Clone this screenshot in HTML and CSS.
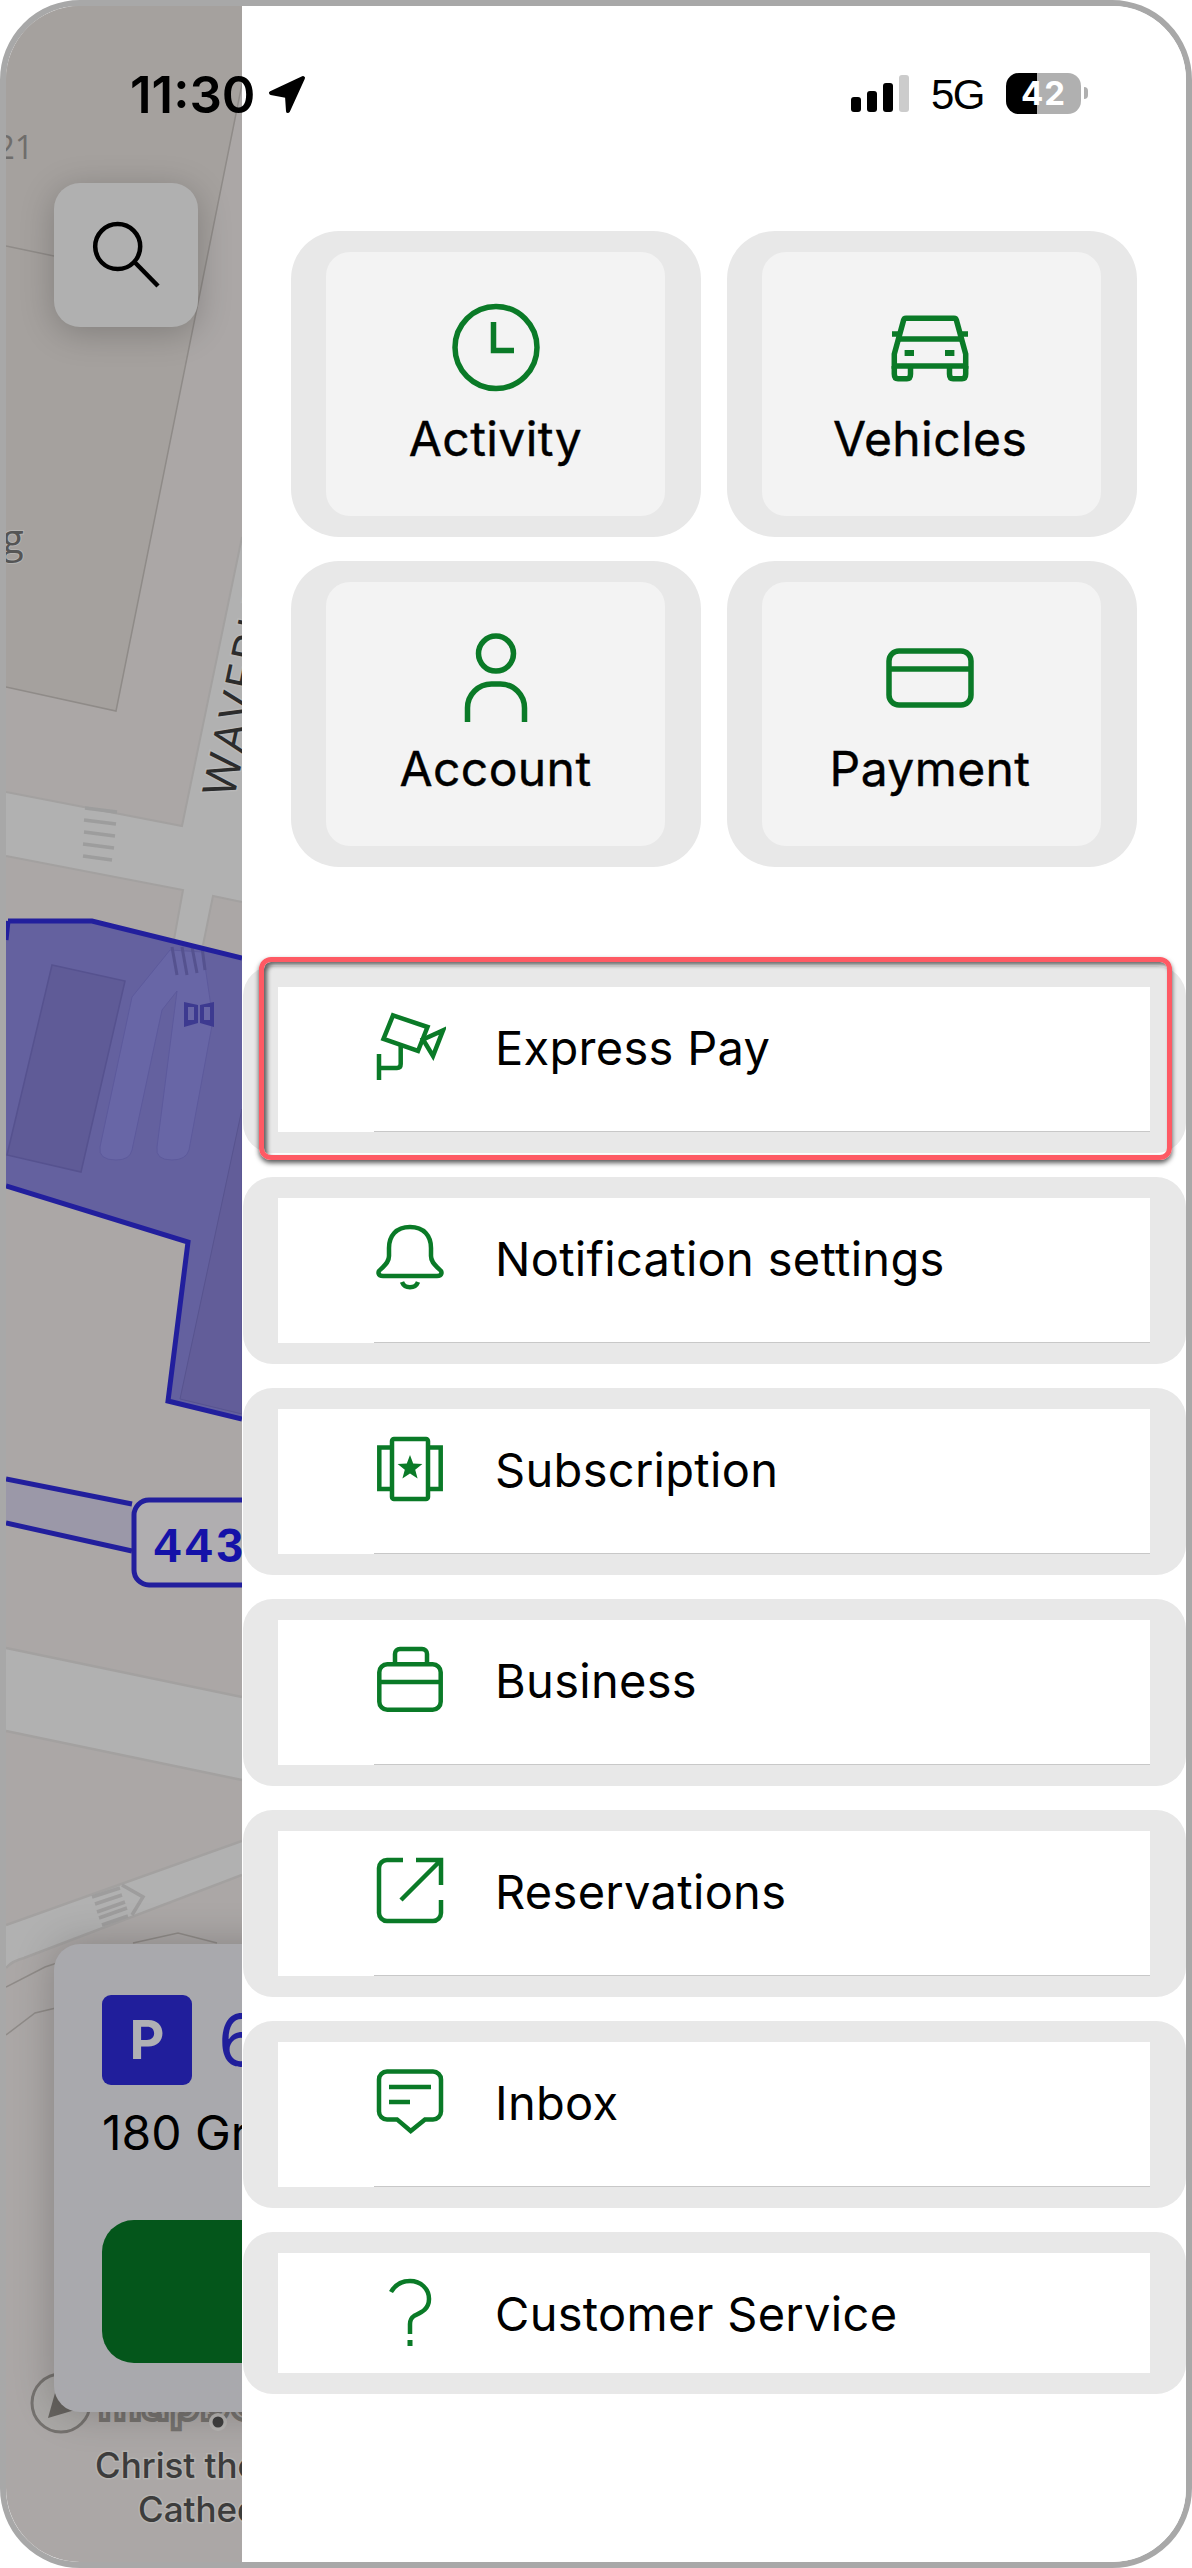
FILE: index.html
```html
<!DOCTYPE html>
<html lang="en">

<head>
    <meta charset="UTF-8">
    <meta name="viewport" content="width=device-width, initial-scale=1.0">
    <link rel="stylesheet" href="styles.css">
    <title>Menu</title>
</head>

<body>
    <div class="phone">
        <div class="status-bar">
            <div class="status-left">
                <span class="time">11:30</span>
                <svg class="loc-arrow" viewBox="0 0 38 39"><polygon points="35,3 3,18 19,21 20,36" /></svg>
            </div>
            <div class="status-right">
                <div class="signal">
                    <span class="bar bar-1"></span>
                    <span class="bar bar-2"></span>
                    <span class="bar bar-3"></span>
                    <span class="bar bar-4"></span>
                </div>
                <span class="network">5G</span>
                <div class="battery"><span class="battery-text">42</span></div>
                <span class="battery-nub"></span>
            </div>
        </div>

        <div class="map">
            <svg class="map-art" viewBox="6 6 236 2556">
                <rect x="6" y="6" width="236" height="2556" fill="#aba7a6" />
                <polygon points="6,6 242,6 242,84 116,711 6,687" fill="#a5a19e" />
                <path d="M6 246 L198 286 M242 84 L116 711 L6 687" fill="none" stroke="#8f8b88" stroke-width="1.5" />
                <polygon points="242,539 240,560 242,560" fill="#a4a09d" />

                <polygon points="6,792 182,826 242,537 242,902 213,896 203,945 173,945 183,890 6,856" fill="#b1b1b1" />
                <path d="M6 792 L182 826 L242 537 M6 856 L183 890 L173 945 M242 902 L213 896 L203 945" fill="none" stroke="#a3a1a0" stroke-width="2" />
                <path d="M85 808 L117 812 M84 820 L116 824 M84 832 L115 836 M83 844 L114 848 M83 856 L112 860" fill="none" stroke="#9d9d9d" stroke-width="3.5" />
                <text class="map-road-name" transform="translate(234 799) rotate(-78)">WAVERLY</text>

                <polygon points="8,921 92,921 242,958 242,1419 168,1401 188,1242 6,1186 6,940" fill="#64619f" />
                <polygon points="242,1109 180,1399 242,1414" fill="#625d99" stroke="#58548f" stroke-width="1" />
                <polygon points="52,965 125,981 81,1172 7,1155" fill="#5f5b97" stroke="#56528f" stroke-width="1.5" />
                <path d="M170 950 L132 997 L100 1147 Q98 1160 116 1160 Q130 1160 132 1150 L162 1010 L177 991 L157 1147 Q155 1160 172 1160 Q186 1160 189 1150 L213 1020 L203 952 Z" fill="#6866a6" stroke="#5d5a9c" stroke-width="1" />
                <path d="M172 947 L177 975 M182 947 L187 975 M192 947 L197 973 M202 947 L205 970" fill="none" stroke="#55528f" stroke-width="3" />
                <path d="M184 1002 L198 1005 V1023 L184 1027Z M214 1002 L200 1005 V1023 L214 1027Z" fill="#3d3a90" />
                <path d="M188 1007 H194 V1020 H188Z M204 1007 H210 V1020 H204Z" fill="#6866a6" />
                <path d="M8 921 H92 L242 958 M6 1186 L188 1242 L168 1401 L242 1419 M8 921 L6 940" fill="none" stroke="#221f9d" stroke-width="5" />

                <polygon points="6,1479 132,1504 132,1551 6,1523" fill="#9b98a8" />
                <path d="M6 1479 L132 1504 M6 1523 L132 1551" fill="none" stroke="#221f9d" stroke-width="5" />
                <rect x="134" y="1500" width="130" height="85" rx="15" fill="#b0aeb0" stroke="#221f9d" stroke-width="5" />
                <text class="map-label-blue" x="154" y="1562">443</text>

                <polygon points="6,1648 242,1697 242,1780 6,1731" fill="#b1b1b1" />
                <path d="M6 1648 L242 1697 M6 1731 L242 1780" fill="none" stroke="#a3a1a0" stroke-width="2.5" />
                <path d="M6 1925 L242 1841 V1875 L24 1958 Q12 1961 6 1968Z" fill="#b1b1b1" />
                <path d="M6 1925 L242 1841 M242 1875 L24 1958 Q12 1961 6 1968" fill="none" stroke="#a3a1a0" stroke-width="2.5" />
                <path d="M92 1897 L120 1888 M95 1904 L122 1895 M97 1912 L125 1902 M99 1918 L127 1908 M102 1925 L128 1916 M122 1885 L143 1897 L132 1915" fill="none" stroke="#9e9d9d" stroke-width="3.5" />
                <path d="M6 1987 L45 1967 L60 1962 M133 1943 L178 1933 L217 1943 M6 2035 L35 2013 L60 2007" fill="none" stroke="#8f8b88" stroke-width="1.5" />

                <circle cx="61" cy="2403" r="29" fill="#aaa8a6" stroke="#75726f" stroke-width="3" />
                <polygon points="55,2393 75,2410 48,2418" fill="#66635f" />
                <text class="map-logo" x="98" y="2420">mapbox</text>
                <circle cx="218" cy="2422" r="9" fill="#b5b3b1" />
                <circle cx="218" cy="2422" r="5.5" fill="#3f3f3f" />
                <text class="map-place" x="95" y="2478">Christ the King</text>
                <text class="map-place" x="138" y="2522">Cathedral</text>
                <text class="map-faded" x="-4" y="159">21</text>
                <text class="map-letter" x="2" y="553">g</text>
            </svg>

            <button class="search-btn">
                <svg viewBox="0 0 72 72"><circle cx="27.7" cy="27.6" r="22.5" /><path d="M45 43.5 L68 67" /></svg>
            </button>

            <div class="lot-card">
                <div class="lot-title">
                    <span class="lot-badge">P</span>
                    <span class="lot-price">6</span>
                </div>
                <div class="lot-address">180 Grand Ave</div>
                <div class="lot-action"></div>
            </div>
        </div>

        <div class="panel">
            <div class="tiles">
                <div class="tile">
                    <div class="tile-inner">
                        <svg class="tile-icon" viewBox="0 0 96 96">
                            <circle cx="48" cy="48.5" r="41" />
                            <path d="M45.5 23 V51.5 H66" />
                        </svg>
                        <span class="tile-label">Activity</span>
                    </div>
                </div>
                <div class="tile">
                    <div class="tile-inner">
                        <svg class="tile-icon" viewBox="-10 -17 96 96">
                            <path d="M2.3 50 V38 L11.5 4.5 Q12 2.3 14 2.3 H62 Q64 2.3 64.5 4.5 L73.7 38 V50 Z" />
                            <path d="M6 23 H70 M0 18 H9 M67 18 H76" />
                            <path d="M2.3 50 V58 Q2.3 62.7 6 62.7 H15 Q18.5 62.7 18.5 58 V50 M57.5 50 V58 Q57.5 62.7 61 62.7 H70 Q73.7 62.7 73.7 58 V50" />
                            <rect class="solid" x="12.6" y="34" width="9.4" height="6" />
                            <rect class="solid" x="53" y="34" width="9.4" height="6" />
                        </svg>
                        <span class="tile-label">Vehicles</span>
                    </div>
                </div>
                <div class="tile">
                    <div class="tile-inner">
                        <svg class="tile-icon" viewBox="0 0 96 96">
                            <circle cx="48" cy="24.6" r="17.5" />
                            <path d="M19.5 93 V79 A24 24 0 0 1 43.5 55 H52.5 A24 24 0 0 1 76.5 79 V93" />
                        </svg>
                        <span class="tile-label">Account</span>
                    </div>
                </div>
                <div class="tile">
                    <div class="tile-inner">
                        <svg class="tile-icon" viewBox="0 0 96 96">
                            <rect x="7" y="22" width="82" height="54" rx="10" />
                            <path d="M7 40 H89" />
                        </svg>
                        <span class="tile-label">Payment</span>
                    </div>
                </div>
            </div>

            <div class="menu">
                <div class="menu-row">
                    <div class="menu-item">
                        <svg class="menu-icon" viewBox="0 0 72 72">
                            <path d="M19 4.4 L53.5 16 L44 40 L9.5 28Z" />
                            <path d="M69 19.4 L59 45 L49 28.5Z" />
                            <path d="M26.7 35 V53 Q26.7 57 23 57 H4.5 M5 43 V69" />
                        </svg>
                        <span class="menu-label">Express Pay</span>
                    </div>
                    <div class="highlight"></div>
                </div>
                <div class="menu-row">
                    <div class="menu-item">
                        <svg class="menu-icon" viewBox="0 0 72 72">
                            <path d="M36 5 C22 5 15 14 15 26 V34 C15 40 11 43 7 47 C3 50 4 54 9 54 H63 C68 54 69 50 65 47 C61 43 57 40 57 34 V26 C57 14 50 5 36 5Z" />
                            <path d="M28 60 A8.5 8 0 0 0 44 60" />
                        </svg>
                        <span class="menu-label">Notification settings</span>
                    </div>
                </div>
                <div class="menu-row">
                    <div class="menu-item">
                        <svg class="menu-icon" viewBox="0 0 72 72">
                            <rect x="18" y="6" width="36" height="60" rx="2" />
                            <path d="M18 14.5 H5.3 V56 H18 M54 14.5 H66.7 V56 H54" />
                            <polygon class="solid" points="36,22 39.2,30.5 48.4,31 41.2,36.7 43.6,45.5 36,40.5 28.4,45.5 30.8,36.7 23.6,31 32.8,30.5" />
                        </svg>
                        <span class="menu-label">Subscription</span>
                    </div>
                </div>
                <div class="menu-row">
                    <div class="menu-item">
                        <svg class="menu-icon" viewBox="0 0 72 72">
                            <rect x="5.3" y="20.3" width="61.4" height="45.4" rx="8" />
                            <path d="M5.3 38 H66.7 M21 20 V10 A5 5 0 0 1 26 5 H48 A5 5 0 0 1 53 10 V20" />
                        </svg>
                        <span class="menu-label">Business</span>
                    </div>
                </div>
                <div class="menu-row">
                    <div class="menu-item">
                        <svg class="menu-icon" viewBox="0 0 72 72">
                            <path d="M29 5 H13 A8 8 0 0 0 5 13 V58 A8 8 0 0 0 13 66 H59 A8 8 0 0 0 67 58 V45" />
                            <path d="M42 5 H67 V30 M27 45 L67 5" />
                        </svg>
                        <span class="menu-label">Reservations</span>
                    </div>
                </div>
                <div class="menu-row">
                    <div class="menu-item">
                        <svg class="menu-icon" viewBox="0 0 72 72">
                            <path d="M13 5.6 H59 A8 8 0 0 1 67 13.6 V45.4 A8 8 0 0 1 59 53.4 H51 L36.7 65 L23 53.4 H13 A8 8 0 0 1 5 45.4 V13.6 A8 8 0 0 1 13 5.6Z" />
                            <path d="M15 21 H57 M15 36 H36" />
                        </svg>
                        <span class="menu-label">Inbox</span>
                    </div>
                </div>
                <div class="menu-row">
                    <div class="menu-item last">
                        <svg class="menu-icon" viewBox="0 0 72 72">
                            <path d="M17 15 C21 8 28 4 36 4 C47 4 55 12 55 22 C55 33 46 36 40 39 C37 41 36 43 36 47 V57" />
                            <rect class="solid" x="33.5" y="63" width="5" height="6" />
                        </svg>
                        <span class="menu-label">Customer Service</span>
                    </div>
                </div>
            </div>
        </div>
    </div>
</body>

</html>
```

FILE: styles.css
```css
body {
    margin: 0;
    background-color: #fff;
    font-family: 'Inter', sans-serif;
}

.phone {
    position: relative;
    width: 1192px;
    height: 2568px;
    box-sizing: border-box;
    display: flex;
    border: 6px solid #a8a8a8;
    border-radius: 80px;
    overflow: hidden;
}

/* status bar sits over both the map and the panel */
.status-bar {
    position: absolute;
    top: 0;
    left: 0;
    right: 0;
    height: 120px;
    z-index: 5;
    display: flex;
    justify-content: space-between;
    padding: 67px 98px 0 124px;
    box-sizing: border-box;
}

.status-left {
    display: flex;
    align-items: flex-start;
    gap: 13px;
}

.time {
    margin-top: -3px;
    font-size: 51px;
    font-weight: 600;
    line-height: 50px;
    color: #000;
}

.loc-arrow {
    width: 38px;
    height: 39px;
    margin-top: 2px;
    fill: #000;
    stroke: #000;
    stroke-width: 4;
    stroke-linejoin: round;
}

.status-right {
    display: flex;
    align-items: flex-start;
}

.signal {
    display: flex;
    align-items: flex-end;
    gap: 6px;
    height: 37px;
    margin-top: 2px;
}

.bar {
    width: 10px;
    border-radius: 3px;
    background-color: #000;
}

.bar-1 { height: 15px; }
.bar-2 { height: 21px; }
.bar-3 { height: 29px; }
.bar-4 { height: 37px; background-color: #ccc; }

.network {
    margin-left: 22px;
    margin-top: 3px;
    font-family: 'Liberation Sans', sans-serif;
    font-size: 42px;
    line-height: 37px;
    letter-spacing: -1.5px;
    color: #000;
}

.battery {
    width: 75px;
    height: 41px;
    margin-left: 22px;
    margin-top: 0;
    border-radius: 13px;
    background: linear-gradient(90deg, #000 42%, #b0b0b0 42%);
    text-align: center;
}

.battery-text {
    font-size: 33px;
    font-weight: 700;
    line-height: 41px;
    color: #fff;
    letter-spacing: 1px;
}

.battery-nub {
    width: 4px;
    height: 12px;
    margin-left: 3px;
    margin-top: 14px;
    border-radius: 0 6px 6px 0;
    background-color: #b0b0b0;
}

.map {
    position: relative;
    flex: 0 0 236px;
    overflow: hidden;
}

.map-art {
    display: block;
    width: 236px;
    height: 2556px;
}

.map-road-name {
    font-family: 'Open Sans', sans-serif;
    font-size: 46px;
    letter-spacing: 3px;
    fill: #2c2c2c;
    stroke: #b8b8b8;
    stroke-width: 3;
    paint-order: stroke;
}

.map-label-blue {
    font-family: 'Liberation Sans', sans-serif;
    font-size: 48px;
    font-weight: 700;
    letter-spacing: 4.5px;
    fill: #1512a8;
}

.map-logo {
    font-family: 'Inter', sans-serif;
    font-size: 48px;
    font-weight: 700;
    fill: #a8a5a3;
    stroke: #75726f;
    stroke-width: 4;
}

.map-place {
    font-family: 'Inter', sans-serif;
    font-size: 35px;
    font-weight: 500;
    fill: #3c3c3c;
    stroke: #b5b3b1;
    stroke-width: 3;
    paint-order: stroke;
}

.map-faded {
    font-family: 'Open Sans', sans-serif;
    font-size: 33px;
    fill: #6f6d6b;
}

.map-letter {
    font-family: 'Open Sans', sans-serif;
    font-size: 40px;
    fill: #555;
    stroke: #b5b3b1;
    stroke-width: 2;
    paint-order: stroke;
}

.search-btn {
    position: absolute;
    left: 48px;
    top: 177px;
    width: 144px;
    height: 144px;
    padding: 0;
    display: flex;
    align-items: center;
    justify-content: center;
    border: none;
    border-radius: 26px;
    background-color: #b0b0b0;
    box-shadow: 0 6px 34px rgba(0, 0, 0, 0.22);
}

.search-btn svg {
    width: 72px;
    height: 72px;
    fill: none;
    stroke: #000;
    stroke-width: 4.5;
}

.lot-card {
    position: absolute;
    left: 48px;
    top: 1938px;
    width: 700px;
    height: 468px;
    padding: 51px 0 0 48px;
    box-sizing: border-box;
    border-radius: 26px;
    background-color: #a9a9ad;
    box-shadow: 0 0 40px rgba(0, 0, 0, 0.22);
}

.lot-title {
    display: flex;
    align-items: center;
    gap: 26px;
}

.lot-badge {
    width: 90px;
    height: 90px;
    border-radius: 9px;
    background-color: #201e9b;
    color: #b0b0b4;
    font-size: 54px;
    font-weight: 700;
    line-height: 90px;
    text-align: center;
}

.lot-price {
    font-size: 72px;
    line-height: 90px;
    color: #201e9b;
}

.lot-address {
    margin-top: 20px;
    font-size: 48px;
    line-height: 56px;
    color: #000;
    white-space: nowrap;
}

.lot-action {
    width: 560px;
    height: 143px;
    margin-top: 59px;
    border-radius: 32px;
    background-color: #04561b;
}

.panel {
    flex: 1;
    background-color: #fff;
    padding-top: 225px;
}

.tiles {
    display: grid;
    grid-template-columns: 410px 410px;
    column-gap: 26px;
    row-gap: 24px;
    padding-left: 49px;
}

.tile {
    height: 306px;
    box-sizing: border-box;
    padding: 21px 36px 21px 35px;
    border-radius: 48px;
    background-color: #e8e8e8;
}

.tile-inner {
    height: 100%;
    box-sizing: border-box;
    display: flex;
    flex-direction: column;
    align-items: center;
    padding-top: 47px;
    border-radius: 24px;
    background-color: #f3f3f3;
}

.tile:nth-child(even) .tile-inner {
    padding-right: 3px;
}

.tile-icon {
    width: 96px;
    height: 96px;
    fill: none;
    stroke: #0a7a27;
    stroke-width: 5.5;
}

.solid {
    fill: #0a7a27;
    stroke: none;
}

.tile-label {
    margin-top: 14px;
    font-size: 48px;
    font-weight: 400;
    line-height: 60px;
    letter-spacing: 0.4px;
    color: #000;
    -webkit-text-stroke: 0.4px #000;
}

.menu {
    display: flex;
    flex-direction: column;
    gap: 24px;
    margin: 99px 0 0 1px;
}

.menu-row {
    position: relative;
    box-sizing: border-box;
    padding: 21px 36px 21px 35px;
    border-radius: 30px;
    background-color: #e8e8e8;
}

.menu-item {
    display: flex;
    align-items: flex-start;
    gap: 49px;
    height: 145px;
    box-sizing: border-box;
    padding: 24px 0 0 96px;
    background-color: #fff;
    background-image: linear-gradient(#c8c8c8, #c8c8c8);
    background-repeat: no-repeat;
    background-position: 96px 100%;
    background-size: 100% 1px;
}

.menu-item.last {
    height: 120px;
    background-image: none;
}

.menu-icon {
    flex: 0 0 72px;
    width: 72px;
    height: 72px;
    fill: none;
    stroke: #0a7a27;
    stroke-width: 4.5;
}

.menu-label {
    margin-top: 1px;
    font-size: 47px;
    line-height: 72px;
    letter-spacing: 0.3px;
    color: #000;
}

/* tutorial highlight around the first row */
.highlight {
    position: absolute;
    left: 16px;
    top: -9px;
    width: 913px;
    height: 203px;
    box-sizing: border-box;
    border: 5px solid #fe5a64;
    border-radius: 12px;
    box-shadow: 0 3px 5px rgba(0, 0, 0, 0.65), inset 3px 3px 4px rgba(0, 0, 0, 0.6);
}
```
